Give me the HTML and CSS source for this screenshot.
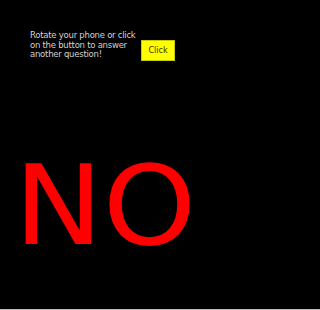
FILE: index.html
```html
<!DOCTYPE html>
<html>
<head>
<meta charset="utf-8">
<link rel="stylesheet" href="styles.css">
</head>
<body>
<div class="screen">
  <div class="top">
    <p class="msg">Rotate your phone or click on the button to answer another question!</p>
    <button class="btn">Click</button>
  </div>
  <div class="answer">NO</div>
</div>
</body>
</html>
```
FILE: styles.css
```css
html, body {
  margin: 0;
  padding: 0;
  background: #000;
}
.screen {
  height: 309px;
  border-bottom: 1px solid #bdbdbd;
  background: #000;
  font-family: "DejaVu Sans", sans-serif;
  display: flex;
  flex-direction: column;
  overflow: hidden;
}
.top {
  display: flex;
  align-items: flex-start;
  padding: 31px 0 0 30px;
  gap: 3px;
}
.msg {
  margin: 0;
  width: 108px;
  font-size: 8.5px;
  line-height: 9.5px;
  letter-spacing: -0.25px;
  color: #d2d2d2;
}
.btn {
  width: 34px;
  height: 21px;
  margin: 9px 0 0 0;
  padding: 0;
  background: #ffff00;
  border: 1px solid #c8c800;
  border-radius: 0;
  color: #333300;
  font-family: "DejaVu Sans", sans-serif;
  font-size: 8px;
}
.answer {
  margin-top: 88.5px;
  padding-left: 13px;
  font-size: 111px;
  line-height: 111px;
  color: #ff0000;
  transform: scaleX(1.07);
  transform-origin: left center;
}
```
